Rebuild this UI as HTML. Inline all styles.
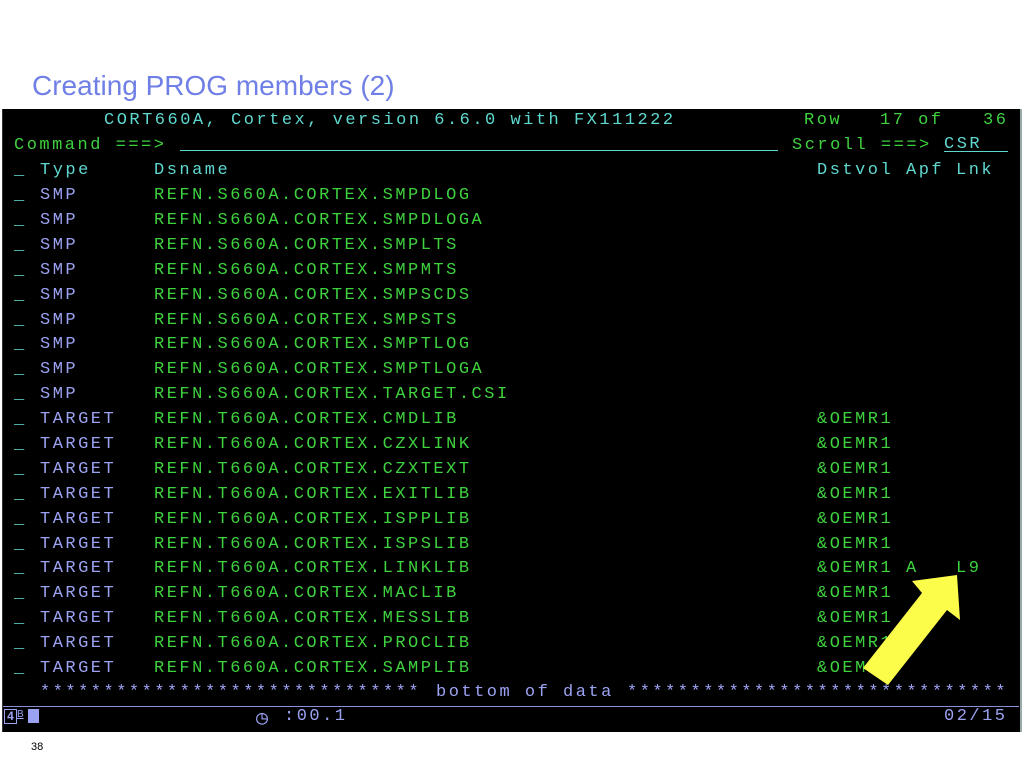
<!DOCTYPE html>
<html><head><meta charset="utf-8"><style>
html,body{margin:0;padding:0;background:#fff;width:1024px;height:768px;overflow:hidden;position:relative}
.title{position:absolute;left:32px;top:70px;font:28px "Liberation Sans",sans-serif;color:#6f7fe6;white-space:nowrap}
.term{position:absolute;left:2px;top:109px;width:1017px;height:623px;background:#000;border-right:2px solid #9aa;border-left:1px solid #333}
.r{position:absolute;left:0;height:25px;width:1024px}
.r span{position:absolute;top:0;line-height:25px;font:17px "Liberation Mono",monospace;letter-spacing:2.5px;white-space:pre}
.t{color:#5fd8d0}.g{color:#3fd23f}.b{color:#9ca2f2}
.u{border-bottom:1px solid #5fd8d0;height:14px}
.pg{position:absolute;left:31px;top:741px;font:11px "Liberation Sans",sans-serif;color:#000}
</style></head><body>
<div class="title">Creating PROG members (2)</div>
<div class="term"></div>
<div class="r" style="top:111px"><span class="t" style="left:104px">CORT660A, Cortex, version 6.6.0 with FX111222</span><span class="g" style="left:804px">Row</span><span class="g" style="left:880px">17 of</span><span class="g" style="left:983px">36</span></div>
<div class="r" style="top:136px"><span class="g" style="left:14px">Command ===></span><span class="u" style="left:180px;width:598px;top:0px"></span><span class="g" style="left:792px">Scroll ===></span><span class="t u" style="left:944px;width:64px;height:15px;line-height:18px;top:0px">CSR</span></div>
<div class="r t" style="top:161px"><span style="left:14px">_</span><span style="left:40px">Type</span><span style="left:154px">Dsname</span><span style="left:817px">Dstvol</span><span style="left:906px">Apf</span><span style="left:956px">Lnk</span></div>
<div class="r" style="top:186px"><span class="t" style="left:14px">_</span><span class="b" style="left:40px">SMP</span><span class="g" style="left:154px">REFN.S660A.CORTEX.SMPDLOG</span></div>
<div class="r" style="top:211px"><span class="t" style="left:14px">_</span><span class="b" style="left:40px">SMP</span><span class="g" style="left:154px">REFN.S660A.CORTEX.SMPDLOGA</span></div>
<div class="r" style="top:236px"><span class="t" style="left:14px">_</span><span class="b" style="left:40px">SMP</span><span class="g" style="left:154px">REFN.S660A.CORTEX.SMPLTS</span></div>
<div class="r" style="top:261px"><span class="t" style="left:14px">_</span><span class="b" style="left:40px">SMP</span><span class="g" style="left:154px">REFN.S660A.CORTEX.SMPMTS</span></div>
<div class="r" style="top:286px"><span class="t" style="left:14px">_</span><span class="b" style="left:40px">SMP</span><span class="g" style="left:154px">REFN.S660A.CORTEX.SMPSCDS</span></div>
<div class="r" style="top:311px"><span class="t" style="left:14px">_</span><span class="b" style="left:40px">SMP</span><span class="g" style="left:154px">REFN.S660A.CORTEX.SMPSTS</span></div>
<div class="r" style="top:335px"><span class="t" style="left:14px">_</span><span class="b" style="left:40px">SMP</span><span class="g" style="left:154px">REFN.S660A.CORTEX.SMPTLOG</span></div>
<div class="r" style="top:360px"><span class="t" style="left:14px">_</span><span class="b" style="left:40px">SMP</span><span class="g" style="left:154px">REFN.S660A.CORTEX.SMPTLOGA</span></div>
<div class="r" style="top:385px"><span class="t" style="left:14px">_</span><span class="b" style="left:40px">SMP</span><span class="g" style="left:154px">REFN.S660A.CORTEX.TARGET.CSI</span></div>
<div class="r" style="top:410px"><span class="t" style="left:14px">_</span><span class="b" style="left:40px">TARGET</span><span class="g" style="left:154px">REFN.T660A.CORTEX.CMDLIB</span><span class="g" style="left:817px">&amp;OEMR1</span></div>
<div class="r" style="top:435px"><span class="t" style="left:14px">_</span><span class="b" style="left:40px">TARGET</span><span class="g" style="left:154px">REFN.T660A.CORTEX.CZXLINK</span><span class="g" style="left:817px">&amp;OEMR1</span></div>
<div class="r" style="top:460px"><span class="t" style="left:14px">_</span><span class="b" style="left:40px">TARGET</span><span class="g" style="left:154px">REFN.T660A.CORTEX.CZXTEXT</span><span class="g" style="left:817px">&amp;OEMR1</span></div>
<div class="r" style="top:485px"><span class="t" style="left:14px">_</span><span class="b" style="left:40px">TARGET</span><span class="g" style="left:154px">REFN.T660A.CORTEX.EXITLIB</span><span class="g" style="left:817px">&amp;OEMR1</span></div>
<div class="r" style="top:510px"><span class="t" style="left:14px">_</span><span class="b" style="left:40px">TARGET</span><span class="g" style="left:154px">REFN.T660A.CORTEX.ISPPLIB</span><span class="g" style="left:817px">&amp;OEMR1</span></div>
<div class="r" style="top:535px"><span class="t" style="left:14px">_</span><span class="b" style="left:40px">TARGET</span><span class="g" style="left:154px">REFN.T660A.CORTEX.ISPSLIB</span><span class="g" style="left:817px">&amp;OEMR1</span></div>
<div class="r" style="top:559px"><span class="t" style="left:14px">_</span><span class="b" style="left:40px">TARGET</span><span class="g" style="left:154px">REFN.T660A.CORTEX.LINKLIB</span><span class="g" style="left:817px">&amp;OEMR1</span><span class="g" style="left:906px">A</span><span class="g" style="left:956px">L9</span></div>
<div class="r" style="top:584px"><span class="t" style="left:14px">_</span><span class="b" style="left:40px">TARGET</span><span class="g" style="left:154px">REFN.T660A.CORTEX.MACLIB</span><span class="g" style="left:817px">&amp;OEMR1</span></div>
<div class="r" style="top:609px"><span class="t" style="left:14px">_</span><span class="b" style="left:40px">TARGET</span><span class="g" style="left:154px">REFN.T660A.CORTEX.MESSLIB</span><span class="g" style="left:817px">&amp;OEMR1</span></div>
<div class="r" style="top:634px"><span class="t" style="left:14px">_</span><span class="b" style="left:40px">TARGET</span><span class="g" style="left:154px">REFN.T660A.CORTEX.PROCLIB</span><span class="g" style="left:817px">&amp;OEMR1</span></div>
<div class="r" style="top:659px"><span class="t" style="left:14px">_</span><span class="b" style="left:40px">TARGET</span><span class="g" style="left:154px">REFN.T660A.CORTEX.SAMPLIB</span><span class="g" style="left:817px">&amp;OEMR1</span></div>
<div class="r b" style="top:683px"><span style="left:40px">******************************</span><span style="left:436px">bottom of data</span><span style="left:627px">******************************</span></div>
<div style="position:absolute;left:3px;top:706px;width:1016px;height:1px;background:#8a90d8"></div>
<div style="position:absolute;left:4px;top:709px;width:11px;height:13px;border:1px solid #9ca2f2;color:#9ca2f2;font:bold 12px 'Liberation Sans',sans-serif;line-height:13px;text-align:center">4</div>
<div style="position:absolute;left:17px;top:709px;width:10px;height:13px;color:#9ca2f2;font:10px 'Liberation Sans',sans-serif;text-decoration:underline">B</div>
<div style="position:absolute;left:28px;top:709px;width:11px;height:14px;background:#9ca2f2"></div>
<div class="r b" style="top:707px"><span style="left:256px;font-size:20px;top:-2px">◷</span><span style="left:284px">:00.1</span><span style="left:944px">02/15</span></div>
<svg style="position:absolute;left:0;top:0" width="1024" height="768">
<polygon points="863,668 888,685 947,610 960,620 957,575 912,581 922,593" fill="#fcfc4a"/>
</svg>
<div class="pg">38</div>
</body></html>
